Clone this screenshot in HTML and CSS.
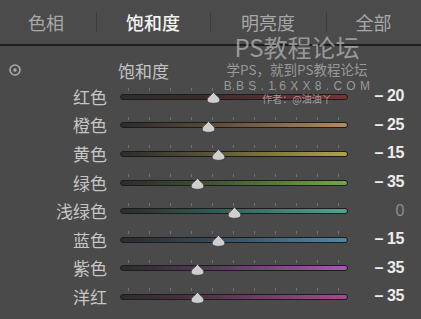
FILE: index.html
```html
<!DOCTYPE html>
<html lang="zh">
<head>
<meta charset="utf-8">
<link rel="stylesheet" href="styles.css">
</head>
<body>
<div class="panel">
  <div class="tabs">
    <div class="tab">色相</div>
    <div class="tab active sep">饱和度</div>
    <div class="tab sep">明亮度</div>
    <div class="tab sep">全部</div>
  </div>
  <div class="content">
    <div class="title-row">
      <svg class="target" width="14" height="14" viewBox="0 0 14 14"><circle cx="7" cy="7" r="5" fill="none" stroke="#aaa" stroke-width="1.6"/><circle cx="7" cy="7" r="1.7" fill="#aaa"/></svg>
      <span class="title">饱和度</span>
    </div>
    <div class="rows">
      <div class="row"><span class="label">红色</span><div class="slider"><div class="ticks"></div><div class="track red"></div><svg class="knob" style="left:40.8%" width="15" height="13" viewBox="0 0 15 13"><path d="M7.5 0.8 C8.6 3.8 13.8 6 13.8 9 C13.8 11.3 11.5 12.3 7.5 12.3 C3.5 12.3 1.2 11.3 1.2 9 C1.2 6 6.4 3.8 7.5 0.8Z" fill="#cfcfcf" stroke="#3a3a3a" stroke-width="0.8"/></svg></div><span class="value">– 20</span></div>
      <div class="row"><span class="label">橙色</span><div class="slider"><div class="ticks"></div><div class="track orange"></div><svg class="knob" style="left:38.6%" width="15" height="13" viewBox="0 0 15 13"><path d="M7.5 0.8 C8.6 3.8 13.8 6 13.8 9 C13.8 11.3 11.5 12.3 7.5 12.3 C3.5 12.3 1.2 11.3 1.2 9 C1.2 6 6.4 3.8 7.5 0.8Z" fill="#cfcfcf" stroke="#3a3a3a" stroke-width="0.8"/></svg></div><span class="value">– 25</span></div>
      <div class="row"><span class="label">黄色</span><div class="slider"><div class="ticks"></div><div class="track yellow"></div><svg class="knob" style="left:43.4%" width="15" height="13" viewBox="0 0 15 13"><path d="M7.5 0.8 C8.6 3.8 13.8 6 13.8 9 C13.8 11.3 11.5 12.3 7.5 12.3 C3.5 12.3 1.2 11.3 1.2 9 C1.2 6 6.4 3.8 7.5 0.8Z" fill="#cfcfcf" stroke="#3a3a3a" stroke-width="0.8"/></svg></div><span class="value">– 15</span></div>
      <div class="row"><span class="label">绿色</span><div class="slider"><div class="ticks"></div><div class="track green"></div><svg class="knob" style="left:34.2%" width="15" height="13" viewBox="0 0 15 13"><path d="M7.5 0.8 C8.6 3.8 13.8 6 13.8 9 C13.8 11.3 11.5 12.3 7.5 12.3 C3.5 12.3 1.2 11.3 1.2 9 C1.2 6 6.4 3.8 7.5 0.8Z" fill="#cfcfcf" stroke="#3a3a3a" stroke-width="0.8"/></svg></div><span class="value">– 35</span></div>
      <div class="row"><span class="label">浅绿色</span><div class="slider"><div class="ticks"></div><div class="track aqua"></div><svg class="knob" style="left:50.4%" width="15" height="13" viewBox="0 0 15 13"><path d="M7.5 0.8 C8.6 3.8 13.8 6 13.8 9 C13.8 11.3 11.5 12.3 7.5 12.3 C3.5 12.3 1.2 11.3 1.2 9 C1.2 6 6.4 3.8 7.5 0.8Z" fill="#cfcfcf" stroke="#3a3a3a" stroke-width="0.8"/></svg></div><span class="value zero">0</span></div>
      <div class="row"><span class="label">蓝色</span><div class="slider"><div class="ticks"></div><div class="track blue"></div><svg class="knob" style="left:43.4%" width="15" height="13" viewBox="0 0 15 13"><path d="M7.5 0.8 C8.6 3.8 13.8 6 13.8 9 C13.8 11.3 11.5 12.3 7.5 12.3 C3.5 12.3 1.2 11.3 1.2 9 C1.2 6 6.4 3.8 7.5 0.8Z" fill="#cfcfcf" stroke="#3a3a3a" stroke-width="0.8"/></svg></div><span class="value">– 15</span></div>
      <div class="row"><span class="label">紫色</span><div class="slider"><div class="ticks"></div><div class="track purple"></div><svg class="knob" style="left:34.2%" width="15" height="13" viewBox="0 0 15 13"><path d="M7.5 0.8 C8.6 3.8 13.8 6 13.8 9 C13.8 11.3 11.5 12.3 7.5 12.3 C3.5 12.3 1.2 11.3 1.2 9 C1.2 6 6.4 3.8 7.5 0.8Z" fill="#cfcfcf" stroke="#3a3a3a" stroke-width="0.8"/></svg></div><span class="value">– 35</span></div>
      <div class="row"><span class="label">洋红</span><div class="slider"><div class="ticks"></div><div class="track magenta"></div><svg class="knob" style="left:34.2%" width="15" height="13" viewBox="0 0 15 13"><path d="M7.5 0.8 C8.6 3.8 13.8 6 13.8 9 C13.8 11.3 11.5 12.3 7.5 12.3 C3.5 12.3 1.2 11.3 1.2 9 C1.2 6 6.4 3.8 7.5 0.8Z" fill="#cfcfcf" stroke="#3a3a3a" stroke-width="0.8"/></svg></div><span class="value">– 35</span></div>
    </div>
  </div>
  <div class="watermark">
    <div class="wm-big">PS教程论坛</div>
    <div class="wm-mid">学PS，就到PS教程论坛</div>
    <div class="wm-url">BBS.16XX8.COM</div>
    <div class="wm-author">作者：@油油丫</div>
  </div>
</div>
</body>
</html>
```

FILE: styles.css
```css
html, body {
  margin: 0;
  padding: 0;
  background: #4a4a4a;
}
.panel {
  position: relative;
  width: 421px;
  height: 319px;
  overflow: hidden;
  background: #4a4a4a;
  font-family: "Noto Sans CJK SC", "Noto Sans", sans-serif;
  color: #c8c8c8;
}
.tabs {
  display: grid;
  grid-template-columns: 96px 114px 116px 1fr;
  height: 44px;
  border-bottom: 2px solid #1e1e1e;
  background: #4b4b4b;
}
.tab {
  position: relative;
  display: flex;
  align-items: center;
  justify-content: center;
  font-size: 18px;
  line-height: 22px;
  color: #a8a8a8;
  padding-bottom: 1px;
}
.tab:first-child {
  padding-right: 4px;
}
.tab.active {
  color: #f2f2f2;
  font-weight: 500;
}
.tab.sep::before {
  content: "";
  position: absolute;
  left: 0;
  top: 12px;
  bottom: 12px;
  width: 1px;
  background: #3c3c3c;
}
.content {
  display: flex;
  flex-direction: column;
}
.title-row {
  display: flex;
  align-items: center;
  height: 24px;
  margin-top: 12px;
  padding-left: 8px;
}
.target {
  display: block;
}
.title {
  margin-left: 96px;
  font-size: 17px;
  color: #c4c4c4;
}
.rows {
  display: flex;
  flex-direction: column;
}
.row {
  display: grid;
  grid-template-columns: 107px 228px 1fr;
  column-gap: 13px;
  align-items: center;
  height: 28.6px;
}
.row .value {
  padding-right: 17px;
}
.label {
  text-align: right;
  font-size: 17px;
  color: #c6c6c6;
  line-height: 1;
}
.slider {
  position: relative;
  height: 28px;
  display: flex;
  align-items: center;
}
.ticks {
  position: absolute;
  left: 8px;
  width: 212px;
  top: 6px;
  height: 3px;
  background: repeating-linear-gradient(90deg, #707070 0 1px, transparent 1px 21px);
}
.track {
  width: 100%;
  height: 4px;
  border: 1px solid #1c1c1c;
  border-radius: 3px;
  box-sizing: content-box;
  margin-top: 1px;
}
.red { background: linear-gradient(90deg, #2c2c2c 0%, #3a2c2c 35%, #7a3234 100%); }
.orange { background: linear-gradient(90deg, #2c2c2c 0%, #5a4a3a 40%, #b48a60 100%); }
.yellow { background: linear-gradient(90deg, #2c2c2c 0%, #5a5636 40%, #b0a448 100%); }
.green { background: linear-gradient(90deg, #2c2c2c 0%, #3e5530 40%, #70a848 100%); }
.aqua { background: linear-gradient(90deg, #2c2c2c 0%, #2f5a52 40%, #48a890 100%); }
.blue { background: linear-gradient(90deg, #2c2c2c 0%, #35495a 40%, #5088a8 100%); }
.purple { background: linear-gradient(90deg, #2c2c2c 0%, #553a58 40%, #a858b0 100%); }
.magenta { background: linear-gradient(90deg, #2c2c2c 0%, #55344a 40%, #a84890 100%); }
.knob {
  position: absolute;
  top: 9px;
  margin-left: -7.5px;
}
.value {
  text-align: right;
  font-family: "Liberation Sans", Arial, sans-serif;
  font-size: 16px;
  font-weight: 700;
  color: #ececec;
  letter-spacing: -0.4px;
}
.value.zero {
  color: #8e8e8e;
  font-weight: 400;
}
.watermark {
  position: absolute;
  left: 217px;
  top: 36px;
  width: 160px;
  text-align: center;
  color: rgba(185, 185, 185, 0.72);
  pointer-events: none;
}
.wm-big {
  font-size: 24px;
  line-height: 22px;
}
.wm-mid {
  font-size: 13.5px;
  line-height: 16px;
  margin-top: 3px;
}
.wm-url {
  font-family: "Liberation Sans", Arial, sans-serif;
  font-size: 12px;
  letter-spacing: 4.3px;
  line-height: 14px;
  margin-top: 2px;
  padding-left: 4px;
}
.wm-author {
  font-size: 10px;
  line-height: 12px;
  color: rgba(200, 200, 200, 0.7);
}
```
